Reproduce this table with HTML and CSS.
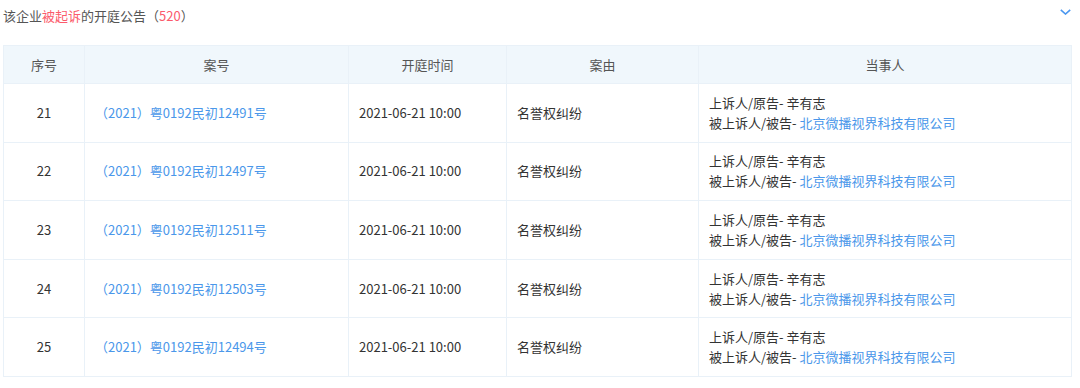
FILE: index.html
```html
<!DOCTYPE html>
<html lang="zh-CN">
<head>
<meta charset="utf-8">
<link rel="stylesheet" href="styles.css">
</head>
<body>
<div class="page">
  <div class="title-bar">
    <div class="title">该企业<span class="red">被起诉</span>的开庭公告（<span class="red">520</span>）</div>
    <svg class="chevron" width="11" height="6" viewBox="0 0 11 6"><path d="M0.8 0.8 L5.5 5 L10.2 0.8" fill="none" stroke="#4a97f0" stroke-width="1.6"/></svg>
  </div>
  <table class="grid">
    <colgroup>
      <col class="c1"><col class="c2"><col class="c3"><col class="c4"><col class="c5">
    </colgroup>
    <thead>
      <tr><th>序号</th><th>案号</th><th>开庭时间</th><th>案由</th><th>当事人</th></tr>
    </thead>
    <tbody>
      <tr><td class="num">21</td><td><span class="link">（2021）粤0192民初12491号</span></td><td>2021-06-21 10:00</td><td>名誉权纠纷</td><td><div>上诉人/原告- 辛有志</div><div>被上诉人/被告- <span class="link">北京微播视界科技有限公司</span></div></td></tr>
      <tr><td class="num">22</td><td><span class="link">（2021）粤0192民初12497号</span></td><td>2021-06-21 10:00</td><td>名誉权纠纷</td><td><div>上诉人/原告- 辛有志</div><div>被上诉人/被告- <span class="link">北京微播视界科技有限公司</span></div></td></tr>
      <tr><td class="num">23</td><td><span class="link">（2021）粤0192民初12511号</span></td><td>2021-06-21 10:00</td><td>名誉权纠纷</td><td><div>上诉人/原告- 辛有志</div><div>被上诉人/被告- <span class="link">北京微播视界科技有限公司</span></div></td></tr>
      <tr><td class="num">24</td><td><span class="link">（2021）粤0192民初12503号</span></td><td>2021-06-21 10:00</td><td>名誉权纠纷</td><td><div>上诉人/原告- 辛有志</div><div>被上诉人/被告- <span class="link">北京微播视界科技有限公司</span></div></td></tr>
      <tr><td class="num">25</td><td><span class="link">（2021）粤0192民初12494号</span></td><td>2021-06-21 10:00</td><td>名誉权纠纷</td><td><div>上诉人/原告- 辛有志</div><div>被上诉人/被告- <span class="link">北京微播视界科技有限公司</span></div></td></tr>
    </tbody>
  </table>
</div>
</body>
</html>
```
FILE: styles.css
```css
html, body {
  margin: 0;
  padding: 0;
  background: #fff;
}
body {
  font-family: "Noto Sans CJK SC", "Noto Sans", sans-serif;
  font-size: 13px;
  color: #333;
}
.page {
  padding: 0 9px 0 3px;
}
.title-bar {
  display: flex;
  justify-content: space-between;
  align-items: center;
  height: 32px;
  margin-bottom: 13px;
}
.title {
  font-size: 13px;
  color: #555;
  line-height: 32px;
}
.red {
  color: #fb5b6c;
}
.chevron {
  display: block;
  margin-top: -8px;
}
.grid {
  width: 1068px;
  border-collapse: collapse;
  table-layout: fixed;
}
.c1 { width: 81px; }
.c2 { width: 264px; }
.c3 { width: 158px; }
.c4 { width: 192px; }
.c5 { width: 373px; }
.grid th, .grid td {
  border: 1px solid #e9f1f8;
  padding: 0 10px;
  line-height: 20px;
}
.grid th {
  background: #f0f7fc;
  font-weight: normal;
  color: #555;
  height: 37px;
  text-align: center;
}
.grid td {
  height: 57.6px;
  text-align: left;
  vertical-align: middle;
}
.grid td.num {
  text-align: center;
}
.link {
  color: #4a97ea;
}
```
